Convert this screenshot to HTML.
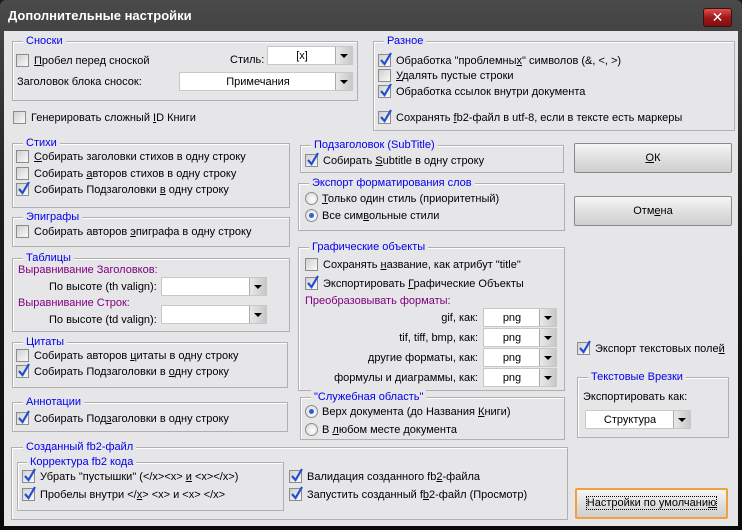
<!DOCTYPE html>
<html><head><meta charset="utf-8">
<style>
*{margin:0;padding:0;box-sizing:border-box}
body{width:742px;height:530px;overflow:hidden;background:#1a1a1a;font-family:"Liberation Sans","DejaVu Sans",sans-serif;font-size:11px;color:#000;position:relative}
#win{position:absolute;left:0;top:0;width:742px;height:530px;background:linear-gradient(#4a4a4a,#1c1c1c 40%,#0a0a0a);border-radius:6px 6px 0 0}
#title{position:absolute;left:8px;top:8px;color:#fff;font-weight:bold;font-size:13px}
#close{position:absolute;left:703px;top:8px;width:29px;height:19px;border:1px solid #3a1010;border-radius:3px;background:linear-gradient(#e05050,#a01818 50%,#801010);color:#fff;font-weight:bold;font-size:14px;text-align:center;line-height:17px}
#body{position:absolute;left:4px;top:31px;width:734px;height:495px;background:#e6e5e8}
.g{position:absolute;border:1px solid #b0b0b0;box-shadow:inset 1px 1px 0 #fff}
.lg{position:absolute;top:-8px;left:10px;background:#e6e5e8;color:#0000ee;padding:0 3px;white-space:nowrap;line-height:14px}
.i{position:absolute;white-space:nowrap;height:14px;line-height:14px}
.cb{display:inline-block;vertical-align:-3px;width:13px;height:13px;border:1px solid #8c8c8c;background:linear-gradient(135deg,#d0d0d0,#fafafa);margin-right:5px;position:relative}
.cb svg{position:absolute;left:1px;top:-3px}
.rb{display:inline-block;vertical-align:-3px;width:13px;height:13px;border:1px solid #8c8c8c;border-radius:50%;background:radial-gradient(circle at 60% 60%,#fff,#d4d4d4);margin-right:4px;position:relative}
.rb.on:after{content:"";position:absolute;left:3px;top:3px;width:5px;height:5px;border-radius:50%;background:#3060d0}
.t{position:absolute;white-space:nowrap;line-height:14px}
.p{color:#800080}
.cm{position:absolute;background:#fff;border:1px solid #c8c8c8;height:19px;text-align:center;line-height:18px}
.cm:after{content:"";position:absolute;right:0;top:0;width:16px;height:17px;background:linear-gradient(90deg,#e8e8e8,#c8c8c8);border-left:1px solid #aaa}
.cm:before{content:"";position:absolute;right:4px;top:7px;border-left:4px solid transparent;border-right:4px solid transparent;border-top:4px solid #000;z-index:2}
.cm span{position:relative;left:-8px}
.bt{position:absolute;border:1px solid #888;border-radius:2px;background:linear-gradient(#f6f6f6,#e0e0e0 50%,#cfcfcf);text-align:center}
u{text-decoration:underline}
</style></head><body>
<div id="win">
<div id="title">Дополнительные настройки</div>
<div id="close">✕</div>
<div id="body"></div>
</div>
<div style="position:absolute;left:0;top:0;width:742px;height:530px">
<div class="g" style="left:12px;top:41px;width:346px;height:60px"><span class="lg">Сноски</span></div>
<div class="i" style="left:16px;top:54px"><span class="cb"></span><u>П</u>робел перед сноской</div>
<div class="t" style="left:230px;top:53px">Стиль:</div>
<div class="cm" style="left:267px;top:46px;width:86px"><span>[x]</span></div>
<div class="t" style="left:17px;top:75px">Заголовок блока сносок:</div>
<div class="cm" style="left:179px;top:72px;width:174px"><span>Примечания</span></div>
<div class="i" style="left:13px;top:111px"><span class="cb"></span>Генерировать сложный <u>I</u>D Книги</div>

<div class="g" style="left:12px;top:143px;width:278px;height:65px"><span class="lg">Стихи</span></div>
<div class="i" style="left:16px;top:150px"><span class="cb"></span><u>С</u>обирать заголовки стихов в одну строку</div>
<div class="i" style="left:16px;top:167px"><span class="cb"></span>Собирать <u>а</u>второв стихов в одну строку</div>
<div class="i" style="left:16px;top:183px"><span class="cb"><svg width="12" height="14" viewBox="0 0 12 14"><path d="M1 8 L4.5 12 L11 1" stroke="#2050d0" stroke-width="2.2" fill="none"/></svg></span>Собирать Подзаголовки <u>в</u> одну строку</div>

<div class="g" style="left:12px;top:217px;width:278px;height:30px"><span class="lg">Эпиграфы</span></div>
<div class="i" style="left:16px;top:225px"><span class="cb"></span>Собирать авторов <u>э</u>пиграфа в одну строку</div>

<div class="g" style="left:12px;top:258px;width:278px;height:74px"><span class="lg">Таблицы</span></div>
<div class="t p" style="left:18px;top:263px">Выравнивание Заголовков:</div>
<div class="t" style="left:49px;top:280px">По высоте (th valign):</div>
<div class="cm" style="left:161px;top:277px;width:106px"></div>
<div class="t p" style="left:18px;top:296px">Выравнивание Строк:</div>
<div class="t" style="left:49px;top:313px">По высоте (td valign):</div>
<div class="cm" style="left:161px;top:305px;width:106px"></div>

<div class="g" style="left:12px;top:342px;width:276px;height:46px"><span class="lg">Цитаты</span></div>
<div class="i" style="left:16px;top:349px"><span class="cb"></span>Собирать авторов <u>ц</u>итаты в одну строку</div>
<div class="i" style="left:16px;top:365px"><span class="cb"><svg width="12" height="14" viewBox="0 0 12 14"><path d="M1 8 L4.5 12 L11 1" stroke="#2050d0" stroke-width="2.2" fill="none"/></svg></span>Собирать Подзаголовки в <u>о</u>дну строку</div>

<div class="g" style="left:12px;top:402px;width:276px;height:30px"><span class="lg">Аннотации</span></div>
<div class="i" style="left:16px;top:412px"><span class="cb"><svg width="12" height="14" viewBox="0 0 12 14"><path d="M1 8 L4.5 12 L11 1" stroke="#2050d0" stroke-width="2.2" fill="none"/></svg></span>Собирать Под<u>з</u>аголовки в одну строку</div>

<div class="g" style="left:11px;top:447px;width:557px;height:73px"><span class="lg" style="left:11px">Созданный fb2-файл</span></div>
<div class="g" style="left:17px;top:462px;width:267px;height:49px"><span class="lg" style="left:9px">Корректура fb2 кода</span></div>
<div class="i" style="left:22px;top:470px"><span class="cb"><svg width="12" height="14" viewBox="0 0 12 14"><path d="M1 8 L4.5 12 L11 1" stroke="#2050d0" stroke-width="2.2" fill="none"/></svg></span>Убрать "пустышки" (&lt;/x&gt;&lt;x&gt; <u>и</u> &lt;x&gt;&lt;/x&gt;)</div>
<div class="i" style="left:22px;top:488px"><span class="cb"><svg width="12" height="14" viewBox="0 0 12 14"><path d="M1 8 L4.5 12 L11 1" stroke="#2050d0" stroke-width="2.2" fill="none"/></svg></span>Пробелы внутри &lt;/<u>x</u>&gt; &lt;x&gt; и &lt;x&gt; &lt;/x&gt;</div>
<div class="i" style="left:289px;top:470px"><span class="cb"><svg width="12" height="14" viewBox="0 0 12 14"><path d="M1 8 L4.5 12 L11 1" stroke="#2050d0" stroke-width="2.2" fill="none"/></svg></span>Валидация созданного fb<u>2</u>-файла</div>
<div class="i" style="left:289px;top:488px"><span class="cb"><svg width="12" height="14" viewBox="0 0 12 14"><path d="M1 8 L4.5 12 L11 1" stroke="#2050d0" stroke-width="2.2" fill="none"/></svg></span>Запустить созданный f<u>b</u>2-файл (Просмотр)</div>

<div class="g" style="left:373px;top:41px;width:362px;height:90px"><span class="lg">Разное</span></div>
<div class="i" style="left:378px;top:54px"><span class="cb"><svg width="12" height="14" viewBox="0 0 12 14"><path d="M1 8 L4.5 12 L11 1" stroke="#2050d0" stroke-width="2.2" fill="none"/></svg></span>Обработка "проблемны<u>х</u>" символов (&amp;, &lt;, &gt;)</div>
<div class="i" style="left:378px;top:69px"><span class="cb"></span><u>У</u>далять пустые строки</div>
<div class="i" style="left:378px;top:85px"><span class="cb"><svg width="12" height="14" viewBox="0 0 12 14"><path d="M1 8 L4.5 12 L11 1" stroke="#2050d0" stroke-width="2.2" fill="none"/></svg></span>Обработка ссылок внутри <u>д</u>окумента</div>
<div class="i" style="left:378px;top:111px"><span class="cb"><svg width="12" height="14" viewBox="0 0 12 14"><path d="M1 8 L4.5 12 L11 1" stroke="#2050d0" stroke-width="2.2" fill="none"/></svg></span>Сохранять <u>f</u>b2-файл в utf-8, если в тексте есть маркеры</div>

<div class="g" style="left:300px;top:145px;width:264px;height:28px"><span class="lg">Подзаголовок (SubTitle)</span></div>
<div class="i" style="left:305px;top:154px"><span class="cb"><svg width="12" height="14" viewBox="0 0 12 14"><path d="M1 8 L4.5 12 L11 1" stroke="#2050d0" stroke-width="2.2" fill="none"/></svg></span>Собирать <u>S</u>ubtitle в одну строку</div>

<div class="g" style="left:298px;top:183px;width:267px;height:48px"><span class="lg">Экспорт форматирования слов</span></div>
<div class="i" style="left:305px;top:192px"><span class="rb"></span><u>Т</u>олько один стиль (приоритетный)</div>
<div class="i" style="left:305px;top:209px"><span class="rb on"></span>Все сим<u>в</u>ольные стили</div>

<div class="g" style="left:298px;top:247px;width:267px;height:144px"><span class="lg">Графические объекты</span></div>
<div class="i" style="left:305px;top:258px"><span class="cb"></span>Сохранять <u>н</u>азвание, как атрибут "title"</div>
<div class="i" style="left:305px;top:277px"><span class="cb"><svg width="12" height="14" viewBox="0 0 12 14"><path d="M1 8 L4.5 12 L11 1" stroke="#2050d0" stroke-width="2.2" fill="none"/></svg></span>Экспортировать <u>Г</u>рафические Объекты</div>
<div class="t p" style="left:305px;top:294px">Преобразовывать форматы:</div>
<div class="t" style="right:264px;top:311px">gif, как:</div>
<div class="t" style="right:264px;top:331px">tif, tiff, bmp, как:</div>
<div class="t" style="right:264px;top:351px">другие форматы, как:</div>
<div class="t" style="right:264px;top:371px">формулы и диаграммы, как:</div>
<div class="cm" style="left:483px;top:308px;width:74px"><span>png</span></div>
<div class="cm" style="left:483px;top:328px;width:74px"><span>png</span></div>
<div class="cm" style="left:483px;top:348px;width:74px"><span>png</span></div>
<div class="cm" style="left:483px;top:368px;width:74px"><span>png</span></div>

<div class="g" style="left:300px;top:397px;width:265px;height:43px"><span class="lg">"Служебная область"</span></div>
<div class="i" style="left:305px;top:405px"><span class="rb on"></span>Верх документа (до Названия <u>К</u>ниги)</div>
<div class="i" style="left:305px;top:423px"><span class="rb"></span>В <u>л</u>юбом месте документа</div>

<div class="bt" style="left:574px;top:143px;width:158px;height:30px;line-height:28px"><u>О</u>К</div>
<div class="bt" style="left:574px;top:196px;width:158px;height:30px;line-height:28px">Отм<u>е</u>на</div>
<div class="i" style="left:577px;top:342px"><span class="cb"><svg width="12" height="14" viewBox="0 0 12 14"><path d="M1 8 L4.5 12 L11 1" stroke="#2050d0" stroke-width="2.2" fill="none"/></svg></span>Экспорт текстовых поле<u>й</u></div>
<div class="g" style="left:577px;top:377px;width:152px;height:61px"><span class="lg">Текстовые Врезки</span></div>
<div class="t" style="left:583px;top:390px">Экспортировать как:</div>
<div class="cm" style="left:585px;top:410px;width:106px"><span>Структура</span></div>
<div class="bt" style="left:575px;top:488px;width:153px;height:31px;line-height:27px;border:2px solid #f0a040"><span style="outline:1px dotted #000">Настройки по умолчани<u>ю</u></span></div>
</div>
</body></html>
